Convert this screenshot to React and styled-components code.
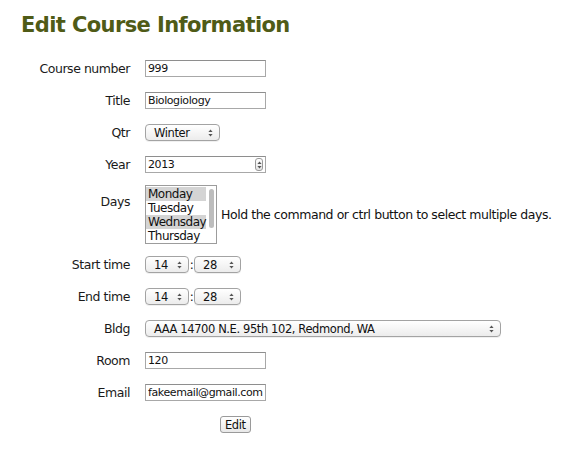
import React from "react";
import styled, { createGlobalStyle } from "styled-components";

const GlobalStyle = createGlobalStyle`
  body {
    margin: 0;
    background: #ffffff;
    font-family: "DejaVu Sans", Verdana, sans-serif;
    color: #111;
  }
`;

const days = [
  { name: "Monday", selected: true },
  { name: "Tuesday", selected: false },
  { name: "Wednsday", selected: true },
  { name: "Thursday", selected: false },
];

function Arrows() {
  return (
    <svg width="5" height="8" viewBox="0 0 5 8">
      <path d="M2.5 0.5 L4.6 3 L0.4 3 Z" fill="#555" />
      <path d="M2.5 7.5 L4.6 5 L0.4 5 Z" fill="#555" />
    </svg>
  );
}

function Select({ width, value }) {
  return (
    <SelectBox $width={width}>
      <span>{value}</span>
      <ArrowWrap>
        <Arrows />
      </ArrowWrap>
    </SelectBox>
  );
}

function App() {
  return (
    <Page>
      <GlobalStyle />
      <Heading>Edit Course Information</Heading>
      <Form>
        <Label>Course number</Label>
        <TextInput defaultValue="999" />

        <Label>Title</Label>
        <TextInput defaultValue="Biologiology" />

        <Label>Qtr</Label>
        <Select width={75} value="Winter" />

        <Label>Year</Label>
        <NumberWrap>
          <TextInput defaultValue="2013" />
          <Spinner>
            <Arrows />
          </Spinner>
        </NumberWrap>

        <Label $top>Days</Label>
        <DaysRow>
          <ListBox>
            <Options>
              {days.map((d) => (
                <Option key={d.name} $selected={d.selected}>
                  {d.name}
                </Option>
              ))}
            </Options>
            <ScrollTrack>
              <Thumb />
            </ScrollTrack>
          </ListBox>
          <Hint>Hold the command or ctrl button to select multiple days.</Hint>
        </DaysRow>

        <Label>Start time</Label>
        <TimeRow>
          <Select width={44} value="14" />
          <Colon>:</Colon>
          <Select width={47} value="28" />
        </TimeRow>

        <Label>End time</Label>
        <TimeRow>
          <Select width={44} value="14" />
          <Colon>:</Colon>
          <Select width={47} value="28" />
        </TimeRow>

        <Label>Bldg</Label>
        <Select width={356} value="AAA 14700 N.E. 95th 102, Redmond, WA" />

        <Label>Room</Label>
        <TextInput defaultValue="120" />

        <Label>Email</Label>
        <TextInput defaultValue="fakeemail@gmail.com" />

        <span />
        <ButtonCell>
          <Button>Edit</Button>
        </ButtonCell>
      </Form>
    </Page>
  );
}

export default App;

const Page = styled.div`
  width: 570px;
  height: 450px;
  overflow: hidden;
`;

const Heading = styled.h1`
  margin: 10px 0 0 21px;
  font-family: "DejaVu Sans", Verdana, sans-serif;
  font-size: 21px;
  line-height: 30px;
  font-weight: bold;
  letter-spacing: -0.6px;
  color: #4f5b17;
`;

const Form = styled.div`
  display: grid;
  grid-template-columns: 122px auto;
  column-gap: 15px;
  row-gap: 15px;
  align-items: center;
  justify-items: start;
  margin-top: 20px;
  padding-left: 8px;
  font-size: 12.5px;
  letter-spacing: -0.45px;
`;

const Label = styled.div`
  justify-self: end;
  align-self: ${(p) => (p.$top ? "start" : "center")};
  padding-top: ${(p) => (p.$top ? "5px" : "0")};
  line-height: 17px;
  color: #1a1a1a;
`;

const TextInput = styled.input`
  box-sizing: border-box;
  width: 121px;
  height: 17px;
  margin: 0;
  padding: 0 1px 0 2px;
  border: 1px solid #a8a8a8;
  border-top-color: #8e8e8e;
  font-family: "DejaVu Sans", Verdana, sans-serif;
  font-size: 11px;
  letter-spacing: -0.4px;
  color: #111;
  background: #fff;
  outline: none;
`;

const NumberWrap = styled.div`
  position: relative;
  height: 17px;
`;

const Spinner = styled.div`
  position: absolute;
  right: 3px;
  top: 2px;
  box-sizing: border-box;
  width: 8px;
  height: 13px;
  border: 1px solid #9a9a9a;
  border-radius: 3px;
  background: linear-gradient(#ffffff, #e4e4e4);
  display: flex;
  align-items: center;
  justify-content: center;
`;

const SelectBox = styled.div`
  box-sizing: border-box;
  width: ${(p) => p.$width}px;
  height: 17px;
  display: flex;
  align-items: center;
  justify-content: space-between;
  padding: 0 6px 0 8px;
  border: 1px solid #a3a3a3;
  border-radius: 4px;
  background: linear-gradient(#ffffff, #ececec);
  box-shadow: 0 1px 0 rgba(0, 0, 0, 0.06);
  font-size: 11.5px;
  letter-spacing: -0.4px;
  color: #111;
  white-space: nowrap;
`;

const ArrowWrap = styled.span`
  display: flex;
  align-items: center;
`;

const TimeRow = styled.div`
  display: flex;
  align-items: center;
`;

const Colon = styled.span`
  width: 5px;
  text-align: center;
  font-size: 12px;
  color: #111;
`;

const DaysRow = styled.div`
  display: flex;
  align-items: center;
  gap: 4px;
  margin: -3px 0 -3px 0;
`;

const ListBox = styled.div`
  box-sizing: border-box;
  width: 72px;
  height: 59px;
  border: 1px solid #9c9c9c;
  display: flex;
  background: #fff;
  overflow: hidden;
`;

const Options = styled.div`
  flex: 1;
  padding-top: 1px;
`;

const Option = styled.div`
  height: 14px;
  line-height: 14px;
  padding-left: 2px;
  font-size: 12px;
  letter-spacing: -0.5px;
  background: ${(p) => (p.$selected ? "#d4d4d4" : "transparent")};
  color: #111;
`;

const ScrollTrack = styled.div`
  width: 10px;
  padding-top: 3px;
  display: flex;
  justify-content: center;
`;

const Thumb = styled.div`
  width: 5px;
  height: 39px;
  border-radius: 3px;
  background: #bdbdbd;
`;

const Hint = styled.span`
  color: #111;
  white-space: nowrap;
`;

const ButtonCell = styled.div`
  padding-left: 75px;
`;

const Button = styled.button`
  box-sizing: border-box;
  height: 17px;
  padding: 0 4px;
  border: 1px solid #9a9a9a;
  border-radius: 3px;
  background: linear-gradient(#ffffff, #e8e8e8);
  font-family: "DejaVu Sans", Verdana, sans-serif;
  font-size: 11.5px;
  letter-spacing: -0.4px;
  color: #111;
`;
